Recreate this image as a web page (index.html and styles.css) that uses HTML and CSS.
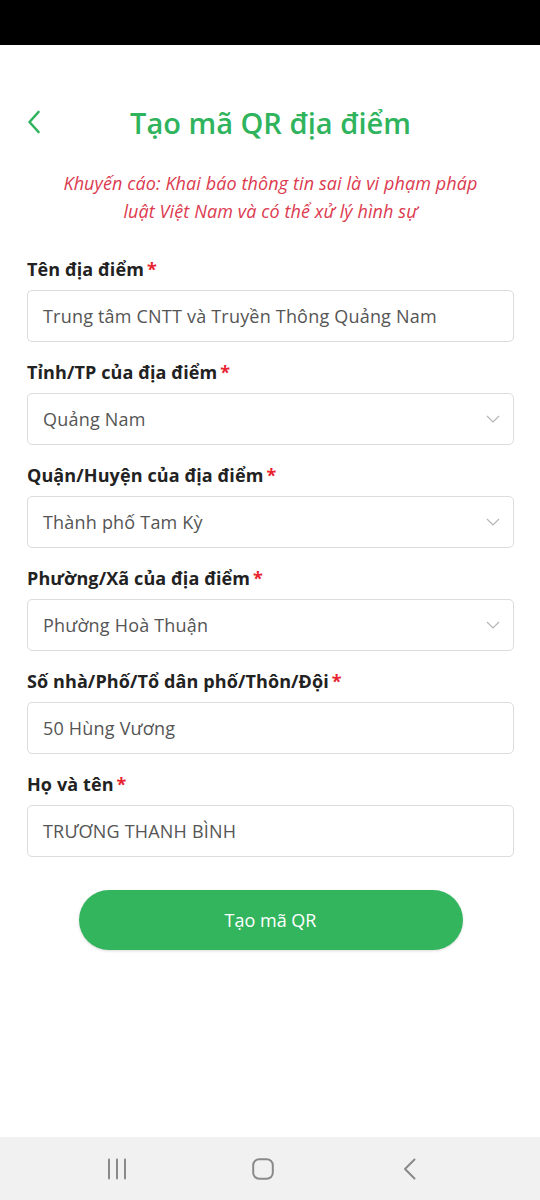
FILE: index.html
```html
<!doctype html>
<html>
<head>
	<meta charset="utf-8">
	<title>Tạo mã QR địa điểm</title>
	<link rel="stylesheet" href="styles.css">
</head>
<body>
	<div class="screen">
		<div class="statusbar"></div>

		<div class="content">
			<div class="header">
				<svg class="back" width="14" height="24" viewBox="0 0 14 24">
					<path d="M11.5 2 L2.5 12 L11.5 22" fill="none" stroke="#2fb45d" stroke-width="2.6" stroke-linecap="round" stroke-linejoin="round"/>
				</svg>
				<h1>Tạo mã QR địa điểm</h1>
			</div>

			<p class="warning">Khuyến cáo: Khai báo thông tin sai là vi phạm pháp luật Việt Nam và có thể xử lý hình sự</p>

			<div class="field">
				<label>Tên địa điểm<span class="req">*</span></label>
				<div class="box">Trung tâm CNTT và Truyền Thông Quảng Nam</div>
			</div>

			<div class="field">
				<label>Tỉnh/TP của địa điểm<span class="req">*</span></label>
				<div class="box select">Quảng Nam
					<svg class="caret" width="14" height="8" viewBox="0 0 14 8"><path d="M1 1 L7 7 L13 1" fill="none" stroke="#b5b5b5" stroke-width="1.2"/></svg>
				</div>
			</div>

			<div class="field">
				<label>Quận/Huyện của địa điểm<span class="req">*</span></label>
				<div class="box select">Thành phố Tam Kỳ
					<svg class="caret" width="14" height="8" viewBox="0 0 14 8"><path d="M1 1 L7 7 L13 1" fill="none" stroke="#b5b5b5" stroke-width="1.2"/></svg>
				</div>
			</div>

			<div class="field">
				<label>Phường/Xã của địa điểm<span class="req">*</span></label>
				<div class="box select">Phường Hoà Thuận
					<svg class="caret" width="14" height="8" viewBox="0 0 14 8"><path d="M1 1 L7 7 L13 1" fill="none" stroke="#b5b5b5" stroke-width="1.2"/></svg>
				</div>
			</div>

			<div class="field">
				<label>Số nhà/Phố/Tổ dân phố/Thôn/Đội<span class="req">*</span></label>
				<div class="box">50 Hùng Vương</div>
			</div>

			<div class="field">
				<label>Họ và tên<span class="req">*</span></label>
				<div class="box">TRƯƠNG THANH BÌNH</div>
			</div>

			<div class="actions">
				<button class="btn">Tạo mã QR</button>
			</div>
		</div>

		<div class="navbar">
			<svg class="nav-recent" width="20" height="22" viewBox="0 0 20 22">
				<path d="M2 1.5 V20.5 M10 1.5 V20.5 M18 1.5 V20.5" stroke="#8a8a8a" stroke-width="2" stroke-linecap="round"/>
			</svg>
			<svg class="nav-home" width="22" height="22" viewBox="0 0 22 22">
				<rect x="1.2" y="1.2" width="19.6" height="19.6" rx="6" fill="none" stroke="#8a8a8a" stroke-width="2"/>
			</svg>
			<svg class="nav-back" width="14" height="22" viewBox="0 0 14 22">
				<path d="M11.5 1.5 L2 11 L11.5 20.5" fill="none" stroke="#8a8a8a" stroke-width="2" stroke-linecap="round" stroke-linejoin="round"/>
			</svg>
		</div>
	</div>
</body>
</html>
```

FILE: styles.css
```css
html, body {margin: 0; padding: 0;}
body {font-family: "Open Sans", "Noto Sans", sans-serif; background: #fff; color: #222;}

.screen {width: 540px; height: 1200px; display: flex; flex-direction: column;}
.statusbar {height: 45px; background: #000; flex: none;}

.content {flex: 1; padding: 49px 26px 0 27px;}

.header {height: 56px; display: flex; align-items: center; justify-content: center; position: relative;}
.header .back {position: absolute; left: 0; top: 16px;}
.header h1 {margin: 0; font-size: 29px; font-weight: 600; color: #2fb45d;}

.warning {margin: 19px 20px 32px; text-align: center; font-style: italic; font-size: 18px; line-height: 28px; color: #dc3a4f; letter-spacing: 0.1px;}

.field {margin-bottom: 18px;}
.field label {display: block; font-size: 18px; font-weight: 700; line-height: 24px; margin-bottom: 9px; color: #222; letter-spacing: 0.1px;}
.field .req {color: #e8232f; margin-left: 3px;}

.box {height: 50px; border: 1px solid #dcdcdc; border-radius: 5px; padding: 0 15px; display: flex; align-items: center; justify-content: space-between; font-size: 18px; color: #555; letter-spacing: 0.2px;}
.box .caret {margin-right: -2px;}

.actions {display: flex; justify-content: center; padding-top: 15px;}
.btn {width: 384px; height: 60px; border: 0; border-radius: 30px; background: #33b55e; color: #fff; font-family: "Open Sans", sans-serif; font-size: 18px; box-shadow: 0 1px 3px rgba(0,0,0,0.15);}

.navbar {height: 63px; background: #f1f1f1; flex: none; display: flex; align-items: center; padding-left: 107px;}
.nav-home {margin-left: 125px;}
.nav-back {margin-left: 129px;}
```
